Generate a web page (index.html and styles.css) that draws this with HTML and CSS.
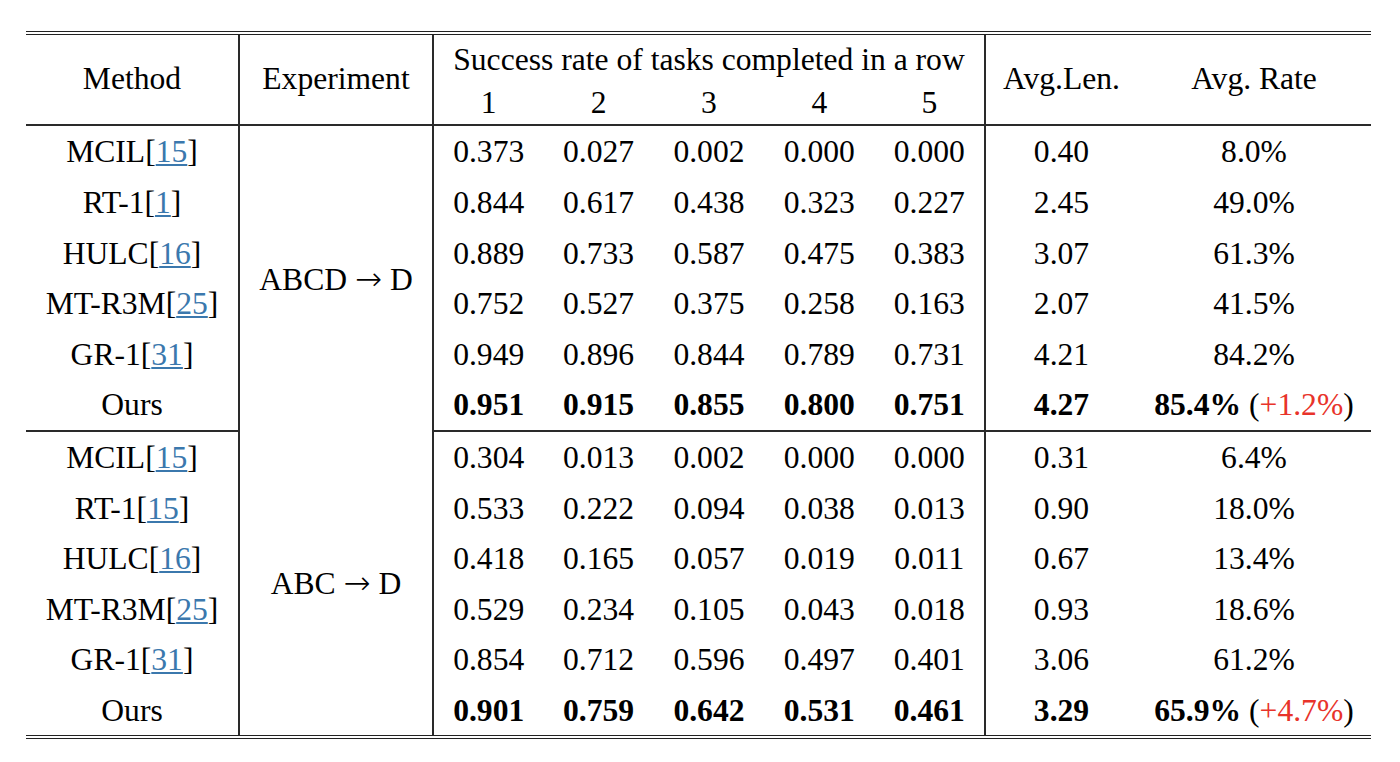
FILE: index.html
```html
<!DOCTYPE html>
<html>
<head>
<meta charset="utf-8">
<link rel="stylesheet" href="styles.css">
</head>
<body>
<div class="wrap">
<table class="results">
  <colgroup>
    <col class="c-method"><col class="c-exp">
    <col class="c-num"><col class="c-num"><col class="c-num"><col class="c-num"><col class="c-num">
    <col class="c-len"><col class="c-rate">
  </colgroup>
  <thead>
    <tr class="h1">
      <th rowspan="2" class="vr">Method</th>
      <th rowspan="2" class="vr">Experiment</th>
      <th colspan="5" class="vr span-title">Success rate of tasks completed in a row</th>
      <th rowspan="2">Avg.Len.</th>
      <th rowspan="2">Avg. Rate</th>
    </tr>
    <tr class="h2">
      <th>1</th><th>2</th><th>3</th><th>4</th><th class="vr">5</th>
    </tr>
  </thead>
  <tbody>
    <tr>
      <td class="vr">MCIL[<a class="ref">15</a>]</td>
      <td rowspan="6" class="vr">ABCD <span class="arrow">→</span> D</td>
      <td>0.373</td><td>0.027</td><td>0.002</td><td>0.000</td><td class="vr">0.000</td>
      <td>0.40</td><td>8.0%</td>
    </tr>
    <tr>
      <td class="vr">RT-1[<a class="ref">1</a>]</td>
      <td>0.844</td><td>0.617</td><td>0.438</td><td>0.323</td><td class="vr">0.227</td>
      <td>2.45</td><td>49.0%</td>
    </tr>
    <tr>
      <td class="vr">HULC[<a class="ref">16</a>]</td>
      <td>0.889</td><td>0.733</td><td>0.587</td><td>0.475</td><td class="vr">0.383</td>
      <td>3.07</td><td>61.3%</td>
    </tr>
    <tr>
      <td class="vr">MT-R3M[<a class="ref">25</a>]</td>
      <td>0.752</td><td>0.527</td><td>0.375</td><td>0.258</td><td class="vr">0.163</td>
      <td>2.07</td><td>41.5%</td>
    </tr>
    <tr>
      <td class="vr">GR-1[<a class="ref">31</a>]</td>
      <td>0.949</td><td>0.896</td><td>0.844</td><td>0.789</td><td class="vr">0.731</td>
      <td>4.21</td><td>84.2%</td>
    </tr>
    <tr class="group-end">
      <td class="vr">Ours</td>
      <td class="best">0.951</td><td class="best">0.915</td><td class="best">0.855</td><td class="best">0.800</td><td class="best vr">0.751</td>
      <td class="best">4.27</td><td><b>85.4%</b> (<span class="gain">+1.2%</span>)</td>
    </tr>
    <tr>
      <td class="vr">MCIL[<a class="ref">15</a>]</td>
      <td rowspan="6" class="vr">ABC <span class="arrow">→</span> D</td>
      <td>0.304</td><td>0.013</td><td>0.002</td><td>0.000</td><td class="vr">0.000</td>
      <td>0.31</td><td>6.4%</td>
    </tr>
    <tr>
      <td class="vr">RT-1[<a class="ref">15</a>]</td>
      <td>0.533</td><td>0.222</td><td>0.094</td><td>0.038</td><td class="vr">0.013</td>
      <td>0.90</td><td>18.0%</td>
    </tr>
    <tr>
      <td class="vr">HULC[<a class="ref">16</a>]</td>
      <td>0.418</td><td>0.165</td><td>0.057</td><td>0.019</td><td class="vr">0.011</td>
      <td>0.67</td><td>13.4%</td>
    </tr>
    <tr>
      <td class="vr">MT-R3M[<a class="ref">25</a>]</td>
      <td>0.529</td><td>0.234</td><td>0.105</td><td>0.043</td><td class="vr">0.018</td>
      <td>0.93</td><td>18.6%</td>
    </tr>
    <tr>
      <td class="vr">GR-1[<a class="ref">31</a>]</td>
      <td>0.854</td><td>0.712</td><td>0.596</td><td>0.497</td><td class="vr">0.401</td>
      <td>3.06</td><td>61.2%</td>
    </tr>
    <tr>
      <td class="vr">Ours</td>
      <td class="best">0.901</td><td class="best">0.759</td><td class="best">0.642</td><td class="best">0.531</td><td class="best vr">0.461</td>
      <td class="best">3.29</td><td><b>65.9%</b> (<span class="gain">+4.7%</span>)</td>
    </tr>
  </tbody>
</table>
</div>
</body>
</html>
```

FILE: styles.css
```css
html, body {
  margin: 0;
  background: #ffffff;
}

body {
  font-family: "Liberation Serif", "Times New Roman", serif;
  color: #000000;
}

.wrap {
  padding: 31px 0 0 26px;
}

.results {
  border-collapse: collapse;
  table-layout: fixed;
  width: 1345px;
  font-size: 31.6px;
  border-top: 4px double #222222;
  border-bottom: 4px double #222222;
}

.c-method { width: 213px; }
.c-exp { width: 194px; }
.c-num { width: 110.4px; }
.c-len { width: 152px; }
.c-rate { width: 234px; }

.results th,
.results td {
  padding: 0;
  text-align: center;
  vertical-align: middle;
  white-space: nowrap;
  font-weight: normal;
  line-height: 1.1;
}

.results td {
  padding-top: 3px;
  height: 47.6px;
}

.results .h1 th {
  height: 47px;
}

.results .h1 .span-title {
  padding-top: 3px;
  height: 44px;
}

.results .h2 th {
  height: 42px;
}

.results thead tr:last-child th,
.results thead .h1 th[rowspan] {
  border-bottom: 2px solid #2a2a2a;
}

.results .vr {
  border-right: 2px solid #2a2a2a;
}

.results .group-end td {
  border-bottom: 2px solid #2a2a2a;
}

.ref {
  color: #3b78ad;
  text-decoration: underline;
  text-decoration-thickness: 1.5px;
  text-underline-offset: 2px;
}

.results .best,
.results b {
  font-weight: bold;
}

.arrow {
  font-family: "DejaVu Sans", sans-serif;
  font-size: 1.02em;
  font-weight: 200;
}

.gain {
  color: #e8332a;
}
```
